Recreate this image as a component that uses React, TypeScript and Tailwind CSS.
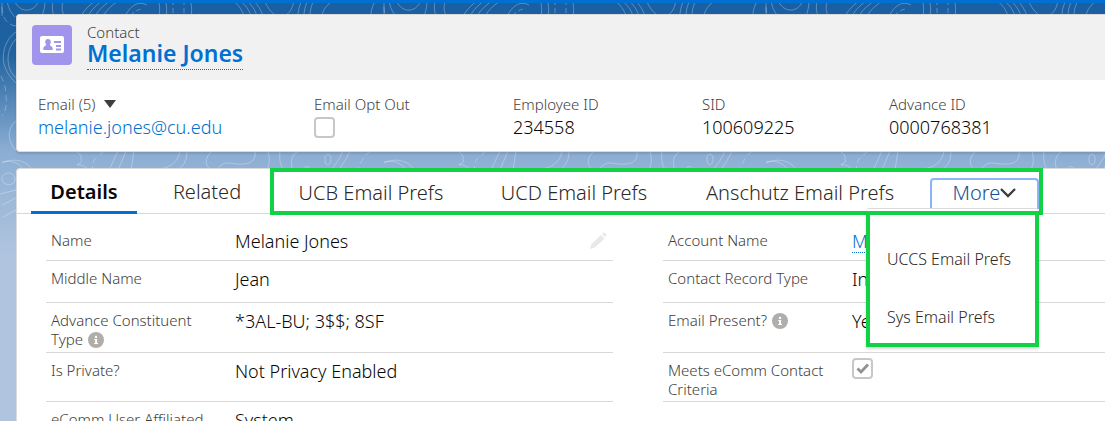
import React, { useState } from "react";

const FONT = "font-['Noto_Sans','Open_Sans',sans-serif]";

function Contours() {
  return (
    <svg className="absolute inset-x-0 top-0 h-[300px] w-full" aria-hidden="true">
      <defs>
        <linearGradient id="fade" x1="0" y1="0" x2="0" y2="1">
          <stop offset="0" stopColor="#195fa3" />
          <stop offset="0.18" stopColor="#21639f" />
          <stop offset="0.5" stopColor="#8badd3" />
          <stop offset="0.85" stopColor="#b0c4df" />
        </linearGradient>
        <pattern id="topo" width="382" height="300" patternUnits="userSpaceOnUse">
          <g fill="none" stroke="#ffffff" strokeOpacity="0.28" strokeWidth="1">
            <path d="M2 0v16M7 0c1 7 3 12 8 17M14 0c5 13 20 14 25 0M45 0c0 6-1 11-3 16M53 0c-1 6-1 11 1 16M64 0c-3 6-2 11 0 16" />
            <path d="M97 0c-7 4-12 9-16 16M104 0c-7 4-12 9-16 16M112 0c-7 4-13 9-17 16M120 0c-7 4-13 9-17 16M125 16c5-9 12-16 22-11M158 0c2 5 2 11 1 16M165 0c2 5 2 11 1 16M190 0c2 5 2 11 1 16" />
            <path d="M130 16c4-4 7-6 11-7M173 0v16M184 0v16" strokeDasharray="5 3" />
            <path d="M232 0c7 5 10 10 12 16M239 0c7 5 10 10 12 16M246 0c6 5 9 10 11 16M253 0c5 5 8 10 10 16M264 0c5 11 12 19 20 16 6-2 9-9 10-16M302 0c-3 6-4 11-4 16M308 0c-3 6-4 11-4 16M314 0c-3 6-4 11-4 16M334 0c-8 5-11 10-12 16M376 0c-4 6-5 11-5 16" />
            <path d="M16 32C4 40 1 57 5 67c3 8 7 12 11 16M16 39c-9 9-10 23-5 33l5 6M16 121c-9 7-9 21 0 29M2 162c8-2 17 0 22 8M2 179c0-8 13-8 13 0s-13 7-13 0M0 194l16-4M2 205l14-7M3 217l13-7" />
            <path d="M1 76c3 6 5 12 5 20 1 8 0 15-4 20M2 7c0 9 4 18 14 19" strokeDasharray="6 4" />
            <path d="M2 163c12-6 27-2 31 9M76 151c9 7 3 8 6 10-2 3-4 2-5 4 8-1 7 3 12 4M118 151l-9 19M126 151l-8 19M134 151l-3 19M180 151c-2 13-13 18-24 18-7 0-12 1-15 3M187 151c0 10-4 17-12 20M212 151c-8 7-7 15-1 19 7 4 7-8 18-7 13 2 28 3 26-12M268 151c2 8 2 14-2 20M280 151c-1 8 0 14 4 20M299 151c-8 3-9 12-6 20M325 160c-1-7 6-8 6-1s-6 8-6 1M304 171c0-7 7-5 6 0M343 151c-3 7-7 13-13 20M350 151c-3 7-7 13-12 20" />
            <path d="M104 151l-10 9-2 10M370 151c-6 5-10 12-13 20" strokeDasharray="6 4" />
          </g>
        </pattern>
      </defs>
      <rect width="100%" height="100%" fill="url(#fade)" />
      <rect width="100%" height="100%" fill="url(#topo)" />
    </svg>
  );
}

function Info() {
  return (
    <svg viewBox="0 0 16 16" className="ml-[5px] inline-block size-4 shrink-0 align-[-3px]" role="img" aria-label="Help">
      <circle cx="8" cy="8" r="8" fill="#b0adab" />
      <circle cx="8" cy="4.9" r="1.2" fill="#fff" />
      <path d="M6.2 7h2.9v3.9h1v1H6.1v-1h1V8h-.9z" fill="#fff" />
    </svg>
  );
}

function CheckBox({ label, checked = false }: { label: string; checked?: boolean }) {
  return (
    <span className="relative inline-flex size-[21px]">
      <input
        type="checkbox"
        aria-label={label}
        defaultChecked={checked}
        className="peer size-[21px] appearance-none rounded border-2 border-[#c9c7c5] bg-white"
      />
      <svg viewBox="0 0 21 21" className="pointer-events-none absolute inset-0 hidden peer-checked:block" aria-hidden="true">
        <path d="m5.500 10.500 3.500 3.500 7-7.500" fill="none" stroke="#919191" strokeWidth="2.800" />
      </svg>
    </span>
  );
}

function Summary({ label, className, children }: { label: React.ReactNode; className: string; children: React.ReactNode }) {
  return (
    <div className={className}>
      <dt className="flex items-center text-[15px] font-light leading-[22px] text-[#444240]">{label}</dt>
      <dd className="flex h-6 items-center text-lg font-light leading-[22px] text-[#080707]">{children}</dd>
    </div>
  );
}

interface FieldProps {
  label: string;
  height: string;
  info?: boolean;
  valuePadding?: string;
  children: React.ReactNode;
}

function Field({ label, height, info, valuePadding = "pt-[7px]", children }: FieldProps) {
  return (
    <div className={`flex border-b border-[#d8d8d8] pl-[5px] ${height}`}>
      <dt className="w-[184px] shrink-0 pr-2 pt-2 text-[15px] font-light leading-[19px] text-[#3e3e3c]">
        {label}
        {info && <Info />}
      </dt>
      <dd className={`flex min-w-0 flex-1 items-start justify-between whitespace-nowrap text-lg font-light leading-[22px] text-[#080707] ${valuePadding}`}>
        {children}
      </dd>
    </div>
  );
}

export default function App() {
  const [open, setOpen] = useState(true);
  return (
    <div className={`relative h-screen overflow-hidden bg-[#b0c4df] ${FONT}`}>
      <Contours />
      <div className="relative border-t-[3px] border-[#0070d2] pl-4 pt-[11px]">
        <header className="rounded-l border border-r-0 border-[#dddbda] bg-white shadow-[0_2px_2px_rgba(0,0,0,0.12)]">
          <div className="flex h-[65px] rounded-tl bg-[#f1f1f1] pl-[15px] pt-[10px]">
            <svg viewBox="0 0 40 40" className="size-10" role="img" aria-label="Contact">
              <rect width="40" height="40" rx="4" fill="#a094ed" />
              <rect x="8" y="11" width="24" height="17" rx="2" fill="#fff" />
              <path d="M16 14c1.700 0 2.800 1.200 2.800 2.900 0 1.500-.8 2.400-1 3-.2.900 2.900 1 2.900 3.700v1.400h-9.400v-1.400c0-2.700 3.100-2.800 2.900-3.700-.2-.6-1-1.500-1-3C13.200 15.200 14.300 14 16 14z" fill="#a094ed" />
              <path d="M22 17h7M24 21h5M24 24.500h5" stroke="#a094ed" strokeWidth="2" />
            </svg>
            <div className="ml-[15px] -mt-px">
              <p className="text-[15px] font-light leading-4 text-[#3e3e3c]">Contact</p>
              <h1 className="text-[23px] font-semibold leading-[26px]">
                <a href="#contact" className="inline-block border-b border-dotted border-[#0070d2] pb-[3px] text-[#0070d2]">Melanie Jones</a>
              </h1>
            </div>
          </div>
          <dl className="flex h-[71px] pl-[21px] pt-[13px]">
            <Summary
              className="w-[276px]"
              label={
                <>
                  Email (5)
                  <button aria-label="More email addresses" className="ml-2">
                    <svg viewBox="0 0 12 8" className="h-2 w-3"><path d="M0 0h12L6 8z" fill="#3e3e3c" /></svg>
                  </button>
                </>
              }
            >
              <a href="mailto:melanie.jones@cu.edu" className="text-[#0070d2]">melanie.jones@cu.edu</a>
            </Summary>
            <Summary className="w-[199px]" label="Email Opt Out"><CheckBox label="Email Opt Out" /></Summary>
            <Summary className="w-[189px]" label="Employee ID">234558</Summary>
            <Summary className="w-[187px]" label="SID">100609225</Summary>
            <Summary className="flex-1" label="Advance ID">0000768381</Summary>
          </dl>
        </header>

        <main className="mt-4 h-[300px] rounded-tl border border-r-0 border-[#dddbda] bg-white">
          <nav className="flex h-[45px] border-b border-[#d8d8d8] pl-[14px] text-xl font-light leading-[46px] text-[#2b2826]">
            <button className="h-[45px] w-[106px] border-b-[3px] border-[#0070d2] font-semibold text-[#080707]">Details</button>
            <button className="w-[133px] pl-[7px]">Related</button>
            <div className="-mt-px flex h-[47px] w-[773px] shrink-0 border-4 border-[#12d145] leading-[41px]">
              <button className="w-[194px]">UCB Email Prefs</button>
              <button className="w-[212px]">UCD Email Prefs</button>
              <button className="mr-[10px] w-[240px]">Anschutz Email Prefs</button>
              <div className="relative mt-[6px] flex w-[109px]">
                <button
                  aria-expanded={open}
                  onClick={() => setOpen(!open)}
                  className="flex h-[31px] w-full items-center justify-center rounded-t-sm border-2 border-b-0 border-[#8cb4f8] pb-1 leading-6 text-[#16508f]"
                >
                  More
                  <svg viewBox="0 0 16 10" className="h-[10px] w-4"><path d="m1 1 7 7 7-7" fill="none" stroke="#3e3e3c" strokeWidth="2.400" /></svg>
                </button>
                {open && (
                  <div className="absolute right-0 top-[30px] z-10 w-[173px] rounded-t border-t border-[#dddbda] bg-white pt-[2px] text-base text-[#2b2826] shadow-[0_2px_3px_rgba(0,0,0,0.16)]">
                    <div className="flex h-[136px] flex-col border-4 border-[#12d145] bg-white pt-[15px] leading-[58px]">
                      <a href="#uccs" className="h-[58px] pl-[17px]">UCCS Email Prefs</a>
                      <a href="#sys" className="h-[58px] pl-[17px]">Sys Email Prefs</a>
                    </div>
                  </div>
                )}
              </div>
            </div>
          </nav>
          <div className="flex gap-[50px] pl-[29px] pt-[9px]">
            <dl className="w-[567px] shrink-0">
              <Field label="Name" height="h-[38px]">
                Melanie Jones
                <button aria-label="Edit Name" className="mr-[6px] h-[22px]">
                  <svg viewBox="0 0 18 18" className="size-[18px]"><path d="m1 17 1.500-5L12 3l3.500 3.500L6 15.500zM13 2l1-1q1-1 2 0l1 1q1 1 0 2l-1 1z" fill="#e9e8e7" /></svg>
                </button>
              </Field>
              <Field label="Middle Name" height="h-[42px]">Jean</Field>
              <Field label="Advance Constituent Type" info height="h-[50px]">*3AL-BU; 3$$; 8SF</Field>
              <Field label="Is Private?" height="h-[49px]">Not Privacy Enabled</Field>
              <Field label="eComm User Affiliated" height="h-[49px]">System</Field>
            </dl>
            <dl className="min-w-0 flex-1">
              <Field label="Account Name" height="h-[38px]"><a href="#account" className="border-b border-dotted border-[#0070d2] text-[#0070d2]">Melanie Jones</a></Field>
              <Field label="Contact Record Type" height="h-[42px]">Individual</Field>
              <Field label="Email Present?" info height="h-[50px]">Yes</Field>
              <Field label="Meets eComm Contact Criteria" height="h-[49px]" valuePadding="pt-[5px]">
                <CheckBox label="Meets eComm Contact Criteria" checked />
              </Field>
            </dl>
          </div>
        </main>
      </div>
    </div>
  );
}
